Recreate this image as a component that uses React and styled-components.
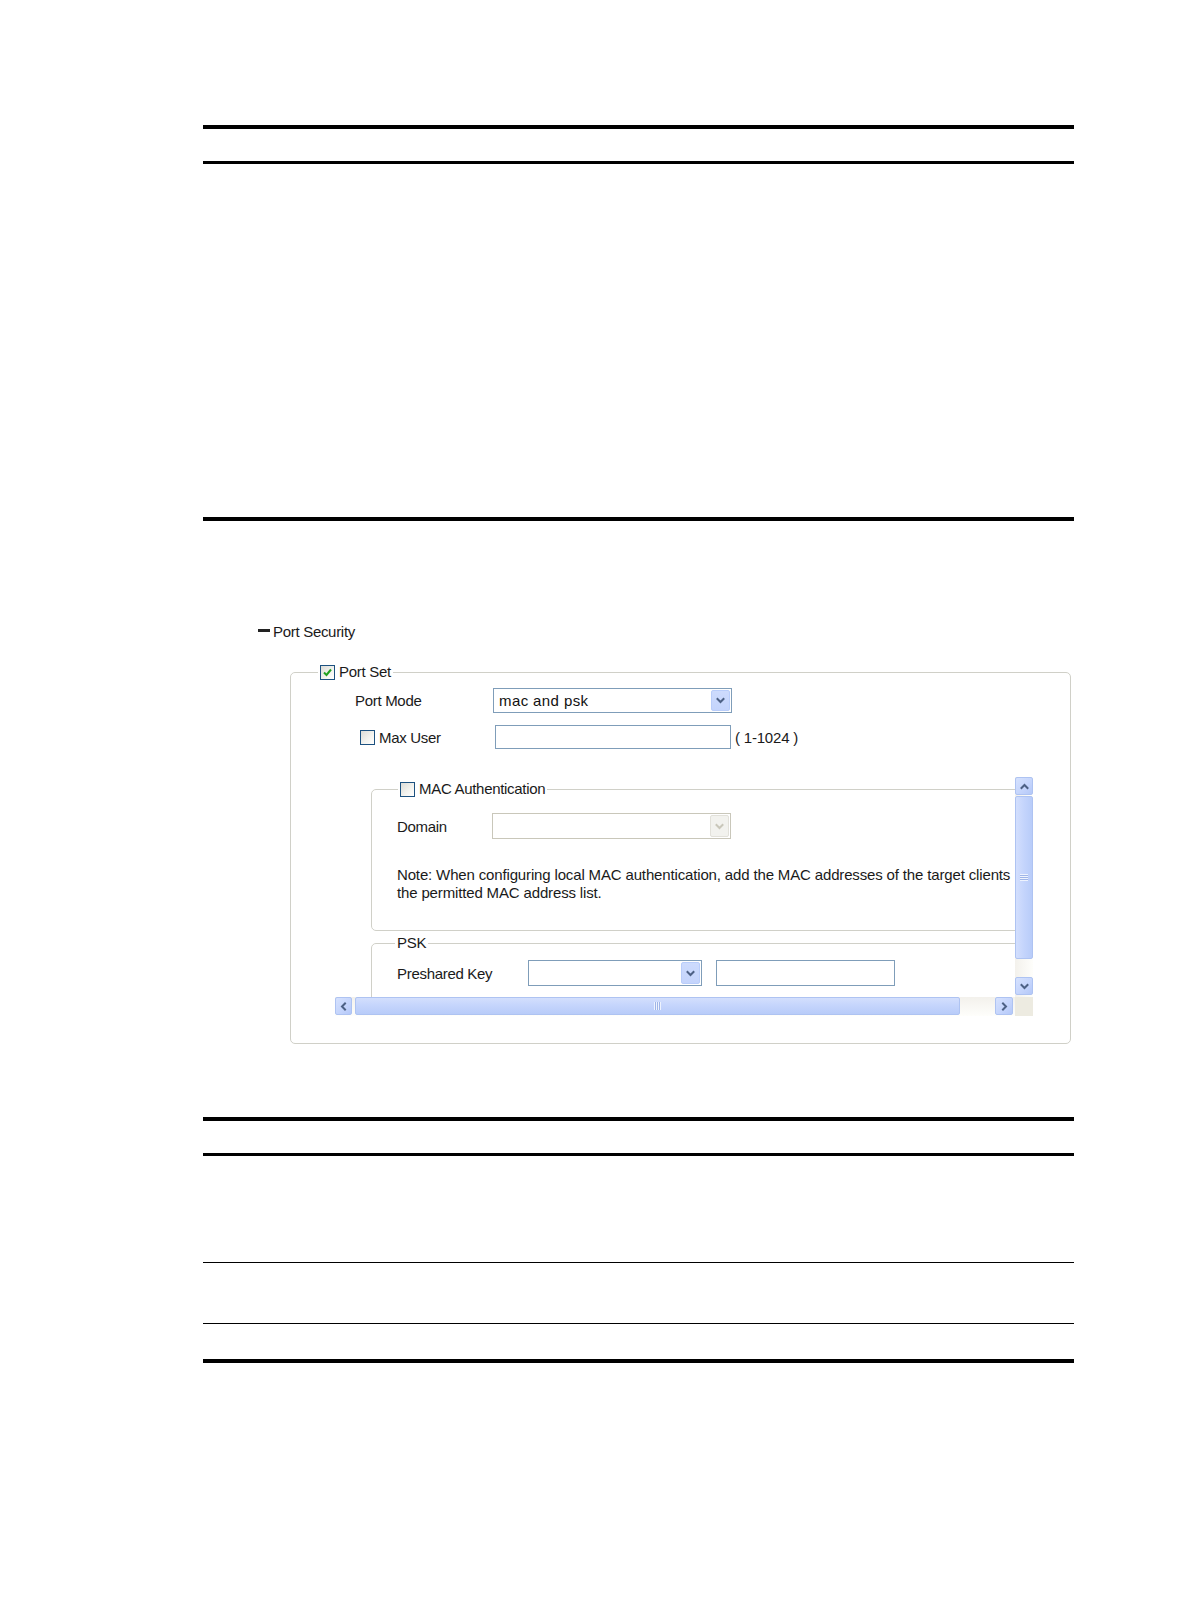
import React from 'react';
import styled, { createGlobalStyle } from 'styled-components';

const GlobalStyle = createGlobalStyle`
  html, body {
    margin: 0;
    padding: 0;
    background: #fff;
  }
  body {
    font-family: "Liberation Sans", Arial, sans-serif;
    color: #1a1a1a;
  }
`;

const Colors = {
  INK: '#1a1a1a',
  RULE: '#000',
  GROUP: '#d0d0c8',
  FIELD: '#7f9db9',
  FIELD_OFF: '#c9c7ba',
  XP_BLUE: '#c4d4fc',
  XP_BLUE_EDGE: '#aec3f2',
  XP_ARROW: '#4d6185',
  CORNER: '#edebe1',
  CHECK: '#1c5180',
  TICK: '#21a121',
};

const Page = styled.div`
  width: 1190px;
  min-height: 1616px;
  box-sizing: border-box;
  padding: 125px 116px 0 203px;
`;

/* empty document tables: only their rules are visible */
const DocTable = styled.div`
  border-top: 4px solid ${Colors.RULE};
  margin-top: ${(p) => p.$top || 0}px;
`;

const HeadRow = styled.div`
  height: 32px;
  border-bottom: 3px solid ${Colors.RULE};
`;

const BodyRow = styled.div`
  height: ${(p) => p.$h}px;
  border-bottom: ${(p) => (p.$last ? 4 : 1)}px solid ${Colors.RULE};
`;

const Figure = styled.section`
  margin-top: 102px;
`;

const TreeTitle = styled.div`
  display: flex;
  align-items: center;
  margin-left: 55px;
  height: 18px;
  font-size: 15px;
  line-height: 18px;
  letter-spacing: -0.3px;
  color: ${Colors.INK};
`;

const Collapse = styled.span`
  display: inline-block;
  width: 12px;
  height: 3px;
  background: #222;
  margin: 0 3px 4px 0;
`;

const Group = styled.fieldset`
  margin: ${(p) => p.$mt || 0}px 0 0 ${(p) => p.$ml || 0}px;
  padding: 0;
  width: ${(p) => p.$w}px;
  box-sizing: border-box;
  border: 1px solid ${Colors.GROUP};
  border-radius: 5px;
  min-inline-size: 0;
`;

const Legend = styled.legend`
  display: flex;
  align-items: center;
  gap: 4px;
  height: 16px;
  margin-left: ${(p) => p.$ml}px;
  padding: 0 2px;
  font-size: 15px;
  line-height: 16px;
  letter-spacing: -0.3px;
  color: ${Colors.INK};
`;

const PanelBody = styled.div`
  padding: 8px 0 27px 0;
`;

const FormRows = styled.div`
  padding-left: 64px;
  display: flex;
  flex-direction: column;
  gap: 12px;
`;

const FormRow = styled.div`
  display: grid;
  grid-template-columns: ${(p) => p.$label}px auto auto;
  justify-content: start;
  align-items: center;
  column-gap: ${(p) => p.$gap || 0}px;
`;

const Label = styled.label`
  display: flex;
  align-items: center;
  gap: 4px;
  font-size: 15px;
  letter-spacing: -0.3px;
  color: ${Colors.INK};
  padding-left: ${(p) => p.$pad || 0}px;
`;

const Hint = styled.span`
  font-size: 15px;
  letter-spacing: -0.2px;
  margin-left: 4px;
  color: ${Colors.INK};
`;

const Box = styled.span`
  display: inline-flex;
  align-items: center;
  justify-content: center;
  width: 13px;
  height: 13px;
  border: 1px solid ${Colors.CHECK};
  background: linear-gradient(135deg, #dcdcd7 0%, #f4f4f0 60%, #ffffff 100%);
  flex: none;
`;

const SelectBox = styled.div`
  display: flex;
  align-items: stretch;
  width: ${(p) => p.$w}px;
  height: ${(p) => p.$h || 25}px;
  box-sizing: border-box;
  border: 1px solid ${(p) => (p.$disabled ? Colors.FIELD_OFF : Colors.FIELD)};
  background: #fff;
`;

const SelectText = styled.span`
  flex: 1;
  display: flex;
  align-items: center;
  padding-left: 5px;
  font-size: 15px;
  letter-spacing: 0.4px;
  color: #111;
`;

const DropButton = styled.span`
  width: 17px;
  margin: 1px;
  display: flex;
  align-items: center;
  justify-content: center;
  border-radius: 2px;
  background: ${(p) =>
    p.$disabled ? '#f2f2ee' : `linear-gradient(#cddbfd, ${Colors.XP_BLUE})`};
  border: 1px solid ${(p) => (p.$disabled ? '#e2e1da' : '#b9cdfa')};
`;

const TextBox = styled.div`
  width: ${(p) => p.$w}px;
  height: ${(p) => p.$h || 25}px;
  box-sizing: border-box;
  border: 1px solid ${Colors.FIELD};
  background: #fff;
  margin-left: ${(p) => p.$ml || 0}px;
`;

const ScrollFrame = styled.div`
  margin: 28px 0 0 44px;
  display: grid;
  grid-template-columns: 680px 18px;
  grid-template-rows: 220px 19px;
`;

const Viewport = styled.div`
  overflow: hidden;
  padding: 4px 0 0 36px;
  box-sizing: border-box;
`;

const GroupBody = styled.div`
  padding: ${(p) => p.$pt}px 0 ${(p) => p.$pb}px 25px;
`;

const Note = styled.p`
  margin: 27px 0 0 0;
  font-size: 15px;
  line-height: 18px;
  letter-spacing: -0.15px;
  white-space: nowrap;
  color: ${Colors.INK};
`;

const VBar = styled.div`
  display: flex;
  flex-direction: column;
  background: linear-gradient(to right, #f3f1ec, #fefefb);
`;

const HBar = styled.div`
  display: flex;
  flex-direction: row;
  background: linear-gradient(#f3f1ec, #fefefb);
`;

const Corner = styled.div`
  background: ${Colors.CORNER};
`;

const BarButton = styled.span`
  flex: none;
  width: ${(p) => p.$w || 18}px;
  height: ${(p) => p.$h || 18}px;
  box-sizing: border-box;
  display: flex;
  align-items: center;
  justify-content: center;
  border-radius: 2px;
  border: 1px solid ${Colors.XP_BLUE_EDGE};
  background: linear-gradient(135deg, #d6e2fe, ${Colors.XP_BLUE} 60%, #b4c8f8);
  margin: ${(p) => p.$m || 0};
`;

const Thumb = styled.span`
  flex: none;
  box-sizing: border-box;
  display: flex;
  align-items: center;
  justify-content: center;
  border-radius: 2px;
  border: 1px solid ${Colors.XP_BLUE_EDGE};
  background: ${(p) =>
    p.$vertical
      ? `linear-gradient(to right, #d3dffd, ${Colors.XP_BLUE} 50%, #b8ccf9)`
      : `linear-gradient(#d3dffd, ${Colors.XP_BLUE} 50%, #b8ccf9)`};
  width: ${(p) => (p.$vertical ? '18px' : `${p.$size}px`)};
  height: ${(p) => (p.$vertical ? `${p.$size}px` : '18px')};
  margin: ${(p) => (p.$vertical ? '1px 0 0 0' : '0 0 0 3px')};
`;

const Grip = styled.span`
  display: block;
  width: ${(p) => (p.$vertical ? '8px' : '7px')};
  height: ${(p) => (p.$vertical ? '7px' : '8px')};
  background: ${(p) =>
    p.$vertical
      ? 'repeating-linear-gradient(#eef3fe 0 1px, #9fb5e8 1px 2px)'
      : 'repeating-linear-gradient(to right, #eef3fe 0 1px, #9fb5e8 1px 2px)'};
`;

const Spacer = styled.span`
  flex: 1;
`;

const Chevron = ({ dir = 'down', color = Colors.XP_ARROW, size = 9 }) => {
  const paths = {
    down: 'M1.5 3 L4.5 6 L7.5 3',
    up: 'M1.5 6 L4.5 3 L7.5 6',
    left: 'M6 1.5 L3 4.5 L6 7.5',
    right: 'M3 1.5 L6 4.5 L3 7.5',
  };
  return (
    <svg width={size} height={size} viewBox="0 0 9 9">
      <path d={paths[dir]} fill="none" stroke={color} strokeWidth="2" strokeLinecap="square" />
    </svg>
  );
};

const CheckBox = ({ checked }) => (
  <Box>
    {checked && (
      <svg width="11" height="11" viewBox="0 0 11 11">
        <path d="M2 5.5 L4.5 8 L9 2.5" fill="none" stroke={Colors.TICK} strokeWidth="2" />
      </svg>
    )}
  </Box>
);

const Select = ({ value, width, height, disabled }) => (
  <SelectBox $w={width} $h={height} $disabled={disabled}>
    <SelectText>{value}</SelectText>
    <DropButton $disabled={disabled}>
      <Chevron dir="down" color={disabled ? Colors.FIELD_OFF : Colors.XP_ARROW} />
    </DropButton>
  </SelectBox>
);

const ScrollPane = ({ children }) => (
  <ScrollFrame>
    <Viewport>{children}</Viewport>
    <VBar>
      <BarButton>
        <Chevron dir="up" />
      </BarButton>
      <Thumb $vertical $size={163}>
        <Grip $vertical />
      </Thumb>
      <Spacer />
      <BarButton $m="0 0 2px 0">
        <Chevron dir="down" />
      </BarButton>
    </VBar>
    <HBar>
      <BarButton $w={17}>
        <Chevron dir="left" />
      </BarButton>
      <Thumb $size={605}>
        <Grip />
      </Thumb>
      <Spacer />
      <BarButton $m="0 2px 0 0">
        <Chevron dir="right" />
      </BarButton>
    </HBar>
    <Corner />
  </ScrollFrame>
);

const PortSecurity = () => (
  <Figure>
    <TreeTitle>
      <Collapse />
      Port Security
    </TreeTitle>
    <Group $w={781} $mt={23} $ml={87}>
      <Legend $ml={27}>
        <CheckBox checked />
        Port Set
      </Legend>
      <PanelBody>
        <FormRows>
          <FormRow $label={138}>
            <Label>Port Mode</Label>
            <Select value="mac and psk" width={239} />
          </FormRow>
          <FormRow $label={138}>
            <Label $pad={5}>
              <CheckBox />
              Max User
            </Label>
            <TextBox $w={236} $h={24} $ml={2} />
            <Hint>( 1-1024 )</Hint>
          </FormRow>
        </FormRows>
        <ScrollPane>
          <Group $w={700} $mt={0}>
            <Legend $ml={26}>
              <CheckBox />
              MAC Authentication
            </Legend>
            <GroupBody $pt={16} $pb={28}>
              <FormRow $label={95}>
                <Label>Domain</Label>
                <Select width={239} height={26} disabled />
              </FormRow>
              <Note>
                Note: When configuring local MAC authentication, add the MAC addresses of the
                target clients
                <br />
                the permitted MAC address list.
              </Note>
            </GroupBody>
          </Group>
          <Group $w={700} $mt={4}>
            <Legend $ml={23}>PSK</Legend>
            <GroupBody $pt={9} $pb={24}>
              <FormRow $label={117} $gap={14}>
                <Label>Preshared Key</Label>
                <Select width={174} height={26} />
                <TextBox $w={179} $h={26} />
              </FormRow>
            </GroupBody>
          </Group>
        </ScrollPane>
      </PanelBody>
    </Group>
  </Figure>
);

const App = () => (
  <>
    <GlobalStyle />
    <Page>
      <DocTable>
        <HeadRow />
        <BodyRow $h={353} $last />
      </DocTable>
      <PortSecurity />
      <DocTable $top={73}>
        <HeadRow />
        <BodyRow $h={106} />
        <BodyRow $h={60} />
        <BodyRow $h={35} $last />
      </DocTable>
    </Page>
  </>
);

export default App;
